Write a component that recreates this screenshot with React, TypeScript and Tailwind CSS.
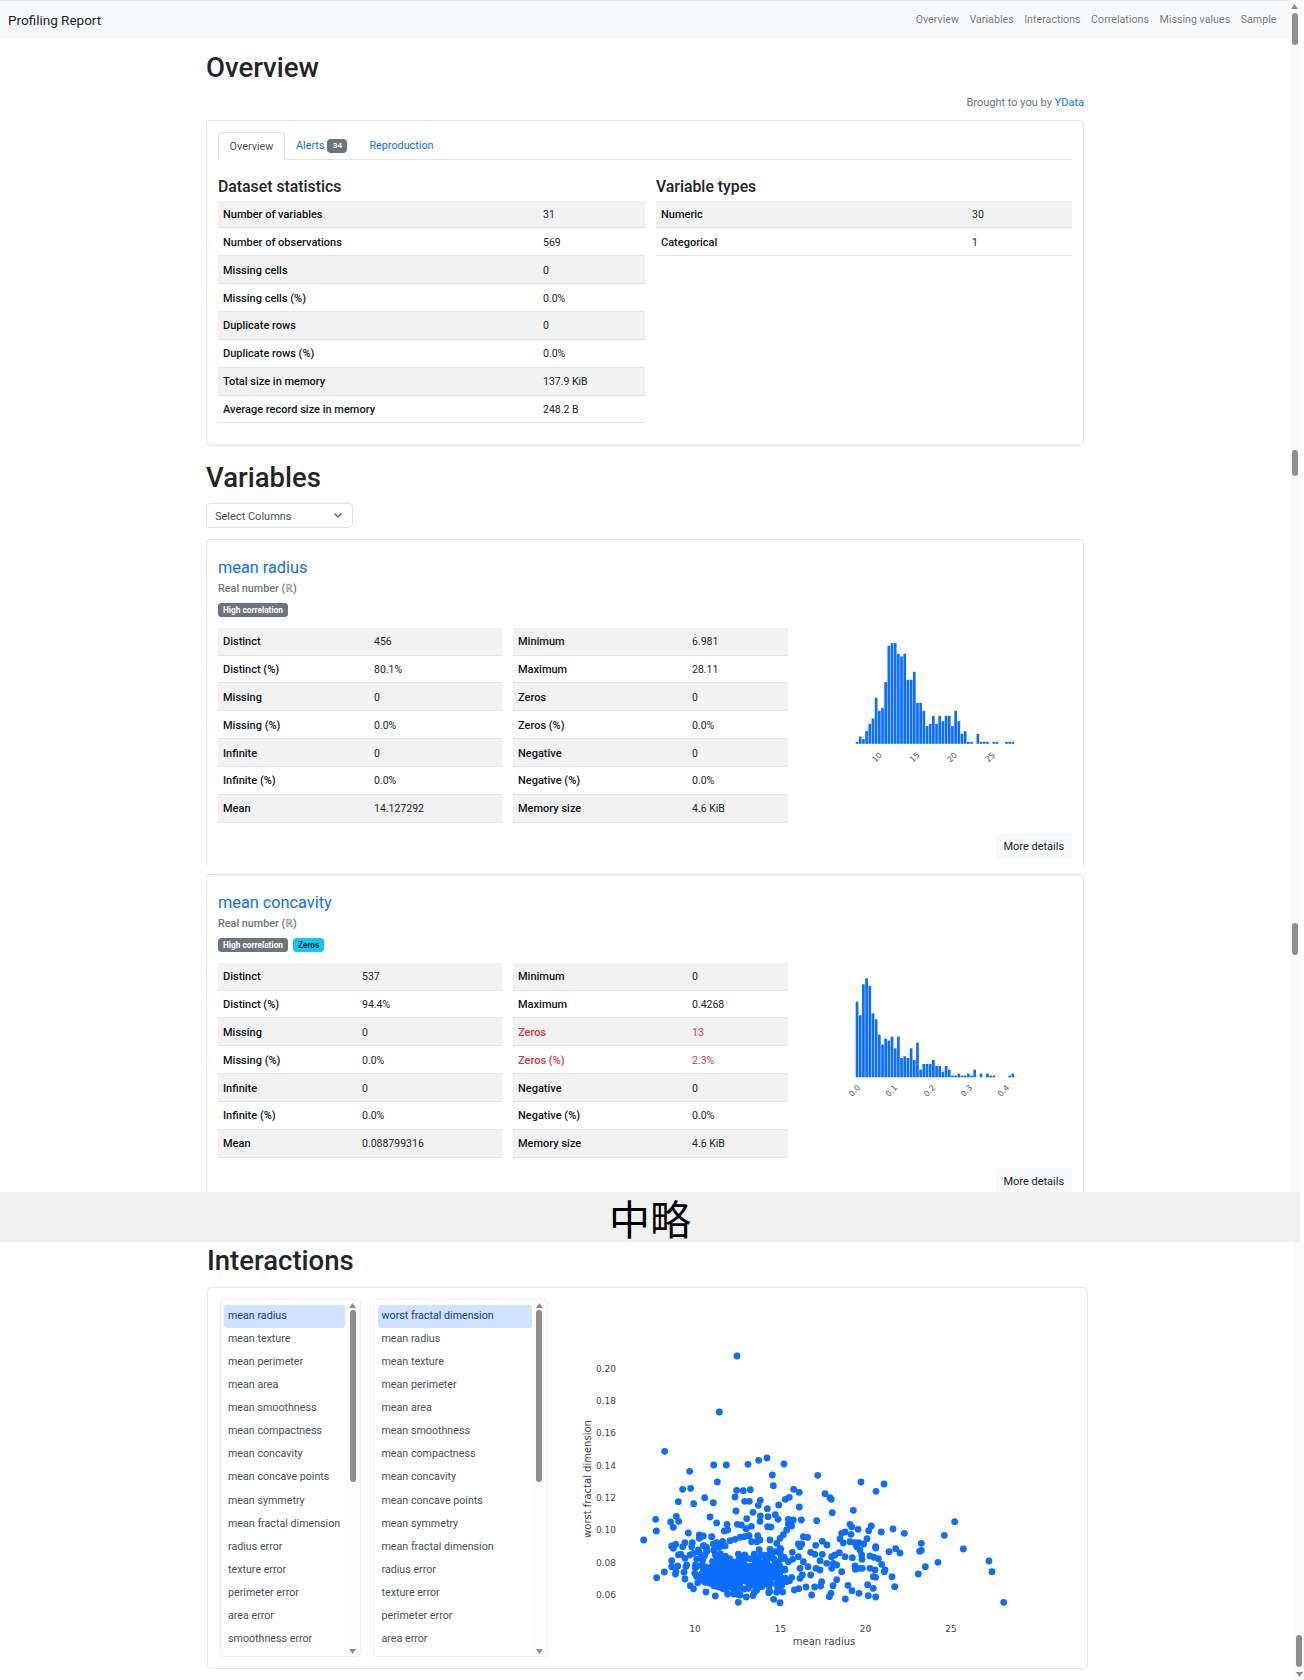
const navLinks = ['Overview', 'Variables', 'Interactions', 'Correlations', 'Missing values', 'Sample']

const datasetStats = [
  ['Number of variables', '31'],
  ['Number of observations', '569'],
  ['Missing cells', '0'],
  ['Missing cells (%)', '0.0%'],
  ['Duplicate rows', '0'],
  ['Duplicate rows (%)', '0.0%'],
  ['Total size in memory', '137.9 KiB'],
  ['Average record size in memory', '248.2 B'],
]

const variableTypes = [
  ['Numeric', '30'],
  ['Categorical', '1'],
]

const columns = [
  'mean radius', 'mean texture', 'mean perimeter', 'mean area', 'mean smoothness', 'mean compactness',
  'mean concavity', 'mean concave points', 'mean symmetry', 'mean fractal dimension', 'radius error',
  'texture error', 'perimeter error', 'area error', 'smoothness error',
]

// bar tops read off the reference, in px above the baseline x3
const radiusBars = [6, 22, 14, 38, 60, 76, 138, 99, 107, 185, 294, 302, 302, 270, 262, 270, 192, 192, 216, 123, 123, 99, 53, 60, 84, 60, 84, 68, 84, 84, 53, 99, 68, 30, 38, 6, 6, 0, 30, 6, 6, 6, 0, 6, 6, 0, 0, 6, 6, 6]
const concavityBars = [227, 186, 279, 297, 274, 192, 174, 128, 98, 116, 110, 122, 87, 122, 58, 63, 58, 87, 52, 104, 23, 40, 40, 40, 52, 34, 34, 17, 34, 23, 5, 5, 11, 5, 5, 11, 5, 23, 0, 11, 0, 11, 5, 5, 0, 0, 0, 0, 5, 11]

const scatterPoints = [
  [501, 108], [448, 276], [284, 394], [359, 454], [431, 435], [469, 435], [534, 433], [566, 421], [591, 414], [642, 432], [607, 465], [442, 486], [610, 497], [743, 466], [873, 486], [942, 492], [918, 514], [338, 508], [362, 505], [325, 545], [371, 551], [404, 533], [430, 548], [500, 511], [520, 512], [541, 509], [495, 531], [524, 544], [538, 544], [571, 541], [565, 556], [592, 566], [498, 573], [549, 577], [626, 555], [646, 538], [658, 532], [671, 508], [688, 517], [688, 561], [765, 521], [780, 533], [784, 538], [787, 578], [850, 571], [740, 602], [694, 600], [257, 598], [319, 589], [302, 606], [326, 604], [310, 622], [259, 633], [221, 660], [355, 639], [420, 591], [440, 609], [471, 613], [463, 633], [473, 630], [502, 613], [514, 615], [530, 596], [528, 626], [544, 619], [571, 588], [570, 604], [594, 590], [616, 584], [624, 598], [593, 620], [603, 621], [655, 598], [670, 600], [655, 612], [665, 618], [650, 630], [640, 644], [630, 655], [840, 613], [845, 620], [896, 632], [904, 618], [864, 628], [934, 636], [969, 627], [1003, 640], [1154, 605], [1123, 646], [1054, 670], [1180, 687], [1054, 691], [1049, 694], [977, 686], [990, 699], [957, 695], [917, 680], [917, 684], [891, 656], [866, 668], [881, 672], [843, 643], [825, 636], [815, 640], [810, 657], [820, 669], [840, 665], [854, 668], [860, 680], [870, 690], [875, 705], [876, 718], [847, 713], [900, 708], [912, 712], [925, 716], [935, 733], [945, 750], [943, 755], [966, 770], [917, 772], [910, 770], [915, 750], [900, 745], [877, 745], [855, 738], [856, 748], [867, 745], [974, 800], [893, 794], [910, 805], [917, 831], [895, 827], [867, 820], [846, 812], [834, 796], [826, 837], [800, 779], [789, 797], [778, 830], [783, 820], [755, 785], [752, 798], [734, 801], [725, 825], [708, 801], [686, 806], [673, 810], [1104, 727], [1066, 740], [1045, 762], [1257, 723], [1266, 755], [1301, 847], [700, 650], [713, 652], [685, 672], [695, 672], [690, 680], [757, 664], [771, 675], [737, 676], [722, 697], [735, 703], [757, 703], [770, 730], [750, 722], [738, 745], [750, 750], [722, 765], [714, 740], [690, 745], [697, 765], [690, 775], [665, 772], [650, 785], [635, 785], [785, 710], [795, 705], [808, 698], [825, 710], [790, 730], [785, 745], [800, 735], [815, 755], [667, 697], [685, 710], [700, 725], [668, 718], [655, 725], [645, 750],
  [260, 773], [283, 756], [305, 678], [310, 685], [345, 668], [338, 680], [367, 668], [365, 680], [305, 722], [305, 740], [323, 738], [318, 754], [342, 757], [345, 777], [361, 797], [383, 788], [408, 816], [436, 828], [405, 787], [420, 790], [333, 703], [345, 715], [350, 735], [360, 705], [370, 700], [385, 690], [410, 692], [400, 677], [388, 645], [388, 655], [400, 648], [425, 650], [430, 672], [458, 664], [440, 668], [450, 680], [480, 662], [495, 658], [510, 652], [522, 650], [537, 648], [563, 647], [545, 665], [560, 665], [570, 660], [600, 660], [620, 670], [600, 688], [615, 695], [630, 685], [630, 700], [635, 715], [505, 847], [473, 822], [491, 822], [510, 825], [529, 831], [596, 818], [611, 838], [630, 848], [620, 817], [638, 816], [560, 810], [575, 800],
]

// the dense middle of the cloud, too packed to read point by point
function clusterPoints() {
  let seed = 42
  const rand = () => {
    seed = (seed * 16807) % 2147483647
    return seed / 2147483647
  }
  const gauss = () => (rand() + rand() + rand() + rand() - 2) / 0.577
  const out: number[][] = []
  for (let i = 0; i < 170; i++) out.push([480 + gauss() * 40, 762 + gauss() * 22])
  for (let i = 0; i < 90; i++) out.push([570 + gauss() * 34, 752 + gauss() * 28])
  for (let i = 0; i < 40; i++) out.push([430 + gauss() * 45, 725 + gauss() * 28])
  for (let i = 0; i < 70; i++) out.push([430 + rand() * 210, 700 + rand() * 110])
  return out
}

function Row({ label, value, labelW, danger }: { label: string; value: string; labelW: string; danger?: boolean }) {
  return (
    <div className={`flex h-[27.86px] items-baseline border-b border-[#e3e5e8] pt-[7.5px] leading-[14px] odd:bg-[#f2f2f2] ${danger ? 'text-[#dc3545]' : 'text-[#212529]'}`}>
      <div className={`${labelW} shrink-0 pl-[5px] text-[11px] font-medium ${danger ? '' : 'text-[#111417]'}`}>{label}</div>
      <div className="text-[10.5px]">{value}</div>
    </div>
  )
}

function Histogram({ bars, baseline, ticks }: { bars: number[]; baseline: number; ticks: { x: number; t: string }[] }) {
  return (
    <svg width="190" height="150" className="ml-[52.5px] shrink-0">
      {bars.map((h, i) => (
        <rect key={i} x={15.7 + i * 3.18} y={baseline - h / 3} width={2.7} height={h / 3} fill="#0d6efd" />
      ))}
      {ticks.map((tick) => (
        <text
          key={tick.t}
          x={tick.x}
          y={baseline + 16}
          transform={`rotate(-45 ${tick.x} ${baseline + 14})`}
          textAnchor="middle"
          className="fill-[#555] text-[8px] [font-family:'DejaVu_Sans',sans-serif]"
        >
          {tick.t}
        </text>
      ))}
    </svg>
  )
}

function VariableCard({
  name,
  badges,
  left,
  right,
  labelW,
  chart,
  className,
}: {
  name: string
  badges: React.ReactNode
  left: string[][]
  right: string[][]
  labelW: string
  chart: React.ReactNode
  className: string
}) {
  return (
    <div className={`overflow-hidden rounded-t border border-b-0 border-[#e1e3e6] pl-[11px] pr-[11px] ${className}`}>
      <div className="mt-[17px] h-[22px] text-[16.3px] leading-[22px] text-[#0d6efd]">{name}</div>
      <div className="mt-[2px] h-[16px] text-[10.8px] font-medium leading-[16px] text-[#6c757d]">Real number (ℝ)</div>
      <div className="mt-[5.7px] flex h-[14.5px] gap-[5px]">{badges}</div>
      <div className="mt-[10.5px] flex">
        <div className="w-[284px] shrink-0">
          {left.map(([k, v]) => (
            <Row key={k} label={k} value={v} labelW={labelW} />
          ))}
        </div>
        <div className="ml-[11px] w-[274.5px] shrink-0">
          {right.map(([k, v]) => (
            <Row key={k} label={k} value={v} labelW="w-[179px]" danger={v === '13' || v === '2.3%'} />
          ))}
        </div>
        {chart}
      </div>
      <div className="mt-[10px] flex justify-end">
        <div className="flex h-[26px] w-[76.5px] items-center justify-center rounded bg-[#f8f9fa] pt-[3px] text-[11px] text-[#212529]">More details</div>
      </div>
    </div>
  )
}

function Badge({ children, className }: { children: React.ReactNode; className: string }) {
  return <span className={`flex h-[14.5px] items-center rounded-[3.5px] px-[5px] text-[8.3px] font-bold ${className}`}>{children}</span>
}

function Arrow({ down, className }: { down?: boolean; className?: string }) {
  return (
    <svg width="7" height="5" viewBox="0 0 7 5" className={className}>
      <polygon points={down ? '0,0 7,0 3.5,5' : '3.5,0 7,5 0,5'} fill="#8f8f8f" />
    </svg>
  )
}

function ListBox({ items, width, thumb }: { items: string[]; width: string; thumb: string }) {
  return (
    <div className={`flex h-[358px] shrink-0 overflow-hidden rounded border border-[#eceef0] ${width}`}>
      <div className="min-w-0 flex-1 pl-[3.5px] pt-[5px]">
        {items.map((item, i) => (
          <div
            key={item}
            className={`flex h-[23.07px] items-center whitespace-nowrap pb-[1px] pl-[4px] text-[10.7px] ${i === 0 ? 'rounded-[3px] bg-[#cfe2ff] text-[#10408f]' : 'text-[#495057]'}`}
          >
            {item}
          </div>
        ))}
      </div>
      <div className="flex w-[15px] shrink-0 flex-col items-center bg-[#fdfdfd] pb-[2px] pt-[3px]">
        <Arrow />
        <div className={`mt-[2px] w-[6px] rounded-full bg-[#8f8f8f] ${thumb}`} />
        <Arrow down className="mt-auto" />
      </div>
    </div>
  )
}

function ScatterPlot() {
  const points = [...scatterPoints, ...clusterPoints()]
  return (
    <svg width="460" height="340" className="ml-[22.5px] mt-[21px] shrink-0 [font-family:'DejaVu_Sans',sans-serif]">
      {points.map(([x, y], i) => (
        <circle key={i} cx={x / 3} cy={y / 3} r={3.4} fill="#0d6efd" />
      ))}
      {['0.20', '0.18', '0.16', '0.14', '0.12', '0.10', '0.08', '0.06'].map((t, i) => (
        <text key={t} x={46} y={51.5 + i * 32.35} textAnchor="end" className="fill-[#444] text-[9px]">
          {t}
        </text>
      ))}
      {[
        ['10', 125],
        ['15', 210.5],
        ['20', 295.5],
        ['25', 381],
      ].map(([t, x]) => (
        <text key={t} x={x} y={312} textAnchor="middle" className="fill-[#444] text-[9px]">
          {t}
        </text>
      ))}
      <text x={254} y={325} textAnchor="middle" className="fill-[#444] text-[10px]">
        mean radius
      </text>
      <text transform="translate(21 159) rotate(-90)" textAnchor="middle" className="fill-[#444] text-[10px]">
        worst fractal dimension
      </text>
    </svg>
  )
}

export default function App() {
  return (
    <div className="relative h-[1680px] w-[1304px] overflow-hidden bg-white [font-family:Roboto,'Noto_Sans',sans-serif]">
      {/* Navbar */}
      <nav className="flex h-[39px] w-[1290px] items-center justify-between border-t border-[#e9ebee] bg-[#f8f9fa] pl-[8px] pr-[13.5px]">
        <div className="text-[13.5px] text-[#212529]">Profiling Report</div>
        <div className="flex gap-[10.5px] text-[10.7px] text-[#0000008c]">
          {navLinks.map((l) => (
            <span key={l}>{l}</span>
          ))}
        </div>
      </nav>

      <div className="ml-[206px] w-[878px]">
        {/* Overview */}
        <h1 className="flex h-[52px] items-center pt-[6px] text-[27.5px] font-medium text-[#212529]">Overview</h1>
        <div className="flex h-[21px] items-center justify-end pt-[4px] text-[11px] text-[#6c757d]">
          <span>
            Brought to you by <span className="text-[#0d6efd]">YData</span>
          </span>
        </div>
        <div className="mt-[8px] h-[326px] rounded border border-[#e1e3e6] px-[11px] pt-[10.5px]">
          <div className="flex h-[28px] items-end border-b border-[#e1e3e6] text-[10.8px]">
            <div className="-mb-px flex h-[28px] w-[67px] items-center justify-center rounded-t border border-b-white border-[#e1e3e6] bg-white pt-[3px] text-[#495057]">Overview</div>
            <div className="ml-[11px] flex h-[28px] items-center pt-[4px] text-[#0d6efd]">
              Alerts
              <span className="ml-[3px] flex h-[14px] w-[20px] -translate-y-[1px] items-center justify-center rounded-[4px] bg-[#6c757d] text-[8px] font-bold text-white">34</span>
            </div>
            <div className="ml-[22px] flex h-[28px] items-center pt-[4px] text-[#0d6efd]">Reproduction</div>
          </div>
          <div className="flex">
            <div className="w-[427px] shrink-0">
              <h4 className="flex h-[41px] items-center pt-[13px] text-[15.8px] font-medium text-[#212529]">Dataset statistics</h4>
              <div>
                {datasetStats.map(([k, v]) => (
                  <Row key={k} label={k} value={v} labelW="w-[325px]" />
                ))}
              </div>
            </div>
            <div className="ml-[11px] flex-1">
              <h4 className="flex h-[41px] items-center pt-[13px] text-[15.8px] font-medium text-[#212529]">Variable types</h4>
              <div>
                {variableTypes.map(([k, v]) => (
                  <Row key={k} label={k} value={v} labelW="w-[316px]" />
                ))}
              </div>
            </div>
          </div>
        </div>

        {/* Variables */}
        <h1 className="flex h-[57px] items-center pt-[7px] text-[27.5px] font-medium text-[#212529]">Variables</h1>
        <div className="flex h-[25px] w-[147px] items-center justify-between rounded border border-[#dee2e6] pl-[8px] pr-[9px] text-[11px] text-[#495057]">
          <span className="pt-[3px]">Select Columns</span>
          <svg width="10" height="7" viewBox="0 0 10 7" fill="none" stroke="#495057" strokeWidth="1.2">
            <path d="M1.5 1.5 5 5l3.5-3.5" />
          </svg>
        </div>
        <VariableCard
          className="mt-[11px] h-[328px]"
          name="mean radius"
          labelW="w-[156px]"
          badges={<Badge className="bg-[#6c757d] text-white">High correlation</Badge>}
          left={[['Distinct', '456'], ['Distinct (%)', '80.1%'], ['Missing', '0'], ['Missing (%)', '0.0%'], ['Infinite', '0'], ['Infinite (%)', '0.0%'], ['Mean', '14.127292']]}
          right={[['Minimum', '6.981'], ['Maximum', '28.11'], ['Zeros', '0'], ['Zeros (%)', '0.0%'], ['Negative', '0'], ['Negative (%)', '0.0%'], ['Memory size', '4.6 KiB']]}
          chart={
            <Histogram
              bars={radiusBars}
              baseline={115.8}
              ticks={[{ x: 37.7, t: '10' }, { x: 75, t: '15' }, { x: 112.7, t: '20' }, { x: 150.7, t: '25' }]}
            />
          }
        />
        <VariableCard
          className="mt-[7px] h-[318px]"
          name="mean concavity"
          labelW="w-[144px]"
          badges={
            <>
              <Badge className="bg-[#6c757d] text-white">High correlation</Badge>
              <Badge className="bg-[#0dcaf0] text-[#212529]">Zeros</Badge>
            </>
          }
          left={[['Distinct', '537'], ['Distinct (%)', '94.4%'], ['Missing', '0'], ['Missing (%)', '0.0%'], ['Infinite', '0'], ['Infinite (%)', '0.0%'], ['Mean', '0.088799316']]}
          right={[['Minimum', '0'], ['Maximum', '0.4268'], ['Zeros', '13'], ['Zeros (%)', '2.3%'], ['Negative', '0'], ['Negative (%)', '0.0%'], ['Memory size', '4.6 KiB']]}
          chart={
            <Histogram
              bars={concavityBars}
              baseline={114.3}
              ticks={[{ x: 15, t: '0.0' }, { x: 52, t: '0.1' }, { x: 90, t: '0.2' }, { x: 127, t: '0.3' }, { x: 164, t: '0.4' }]}
            />
          }
        />
      </div>

      {/* Cut between the two captures */}
      <div className="flex h-[50px] w-[1300px] items-center justify-center bg-[#f0f0f0] text-[41px] leading-[50px] text-black [font-family:'Noto_Sans_CJK_JP',sans-serif]">中略</div>

      <div className="ml-[207px] w-[880.5px]">
        <h1 className="flex h-[45px] items-center pb-[7px] text-[27.5px] font-medium text-[#212529]">Interactions</h1>
        <div className="flex h-[381.5px] rounded border border-[#e6e8ea] pl-[11.5px] pt-[11px]">
          <ListBox items={columns} width="w-[141.5px]" thumb="h-[172px]" />
          <div className="ml-[12px]">
            <ListBox items={['worst fractal dimension', ...columns.slice(0, 14)]} width="w-[174.5px]" thumb="h-[172px]" />
          </div>
          <ScatterPlot />
        </div>
      </div>

      {/* Page scrollbar, over the page */}
      <div className="absolute left-[1290px] top-0 h-[1192px] w-[10px] bg-[#fbfbfb]">
        <Arrow className="absolute left-[1px] top-[4px]" />
        <div className="absolute left-[2px] top-[13px] h-[32px] w-[6px] rounded-full bg-[#8f8f8f]" />
        <div className="absolute left-[2px] top-[450px] h-[26px] w-[6px] rounded-full bg-[#8f8f8f]" />
        <div className="absolute left-[2px] top-[923px] h-[32px] w-[6px] rounded-full bg-[#8f8f8f]" />
      </div>
      <div className="absolute left-[1294px] top-[1242px] h-[438px] w-[10px] bg-[#fbfbfb]">
        <div className="absolute left-[2px] top-[393px] h-[32px] w-[6px] rounded-full bg-[#8f8f8f]" />
        <Arrow down className="absolute left-[1.5px] top-[430px]" />
      </div>
    </div>
  )
}
